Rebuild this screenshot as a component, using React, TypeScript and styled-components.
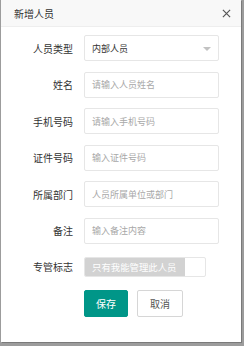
import React from 'react'
import styled, { createGlobalStyle } from 'styled-components'

const GlobalStyle = createGlobalStyle`
  html, body {
    margin: 0;
    padding: 0;
    background: #9c9c9c;
    font-family: "Noto Sans CJK SC", "Liberation Sans", sans-serif;
  }
`

const Page = styled.div`
  width: 244px;
  height: 346px;
  padding-left: 1px;
  box-sizing: border-box;
`

const Modal = styled.div`
  width: 240px;
  height: 342px;
  background: #fff;
  box-shadow: 1px 1px 0 #7a7a7a;
  display: flex;
  flex-direction: column;
`

const Header = styled.div`
  height: 27px;
  box-sizing: border-box;
  background: #f8f8f8;
  border-bottom: 1px solid #eee;
  display: flex;
  align-items: center;
  justify-content: space-between;
  padding: 0 10px 0 13px;
`

const Title = styled.span`
  font-size: 10px;
  color: #333;
`

const Close = styled.svg`
  width: 9px;
  height: 9px;
`

const Form = styled.div`
  display: flex;
  flex-direction: column;
  padding: 8px 22px 0 0;
  gap: 10.5px;
`

const Row = styled.div<{ $top?: number }>`
  display: flex;
  align-items: center;
  gap: 11px;
  margin-top: ${(p) => p.$top || 0}px;
`

const Label = styled.label`
  width: 72px;
  text-align: right;
  font-size: 10px;
  color: #333;
  flex-shrink: 0;
`

const Field = styled.div<{ $muted?: boolean }>`
  position: relative;
  flex: 1;
  height: 26px;
  box-sizing: border-box;
  border: 1px solid #e6e6e6;
  border-radius: 2px;
  display: flex;
  align-items: center;
  padding-left: 7px;
  font-size: 9px;
  color: ${(p) => (p.$muted ? '#a8a8a8' : '#333')};
`

const Arrow = styled.span`
  position: absolute;
  right: 7px;
  top: 11px;
  border-left: 4px solid transparent;
  border-right: 4px solid transparent;
  border-top: 4px solid #c2c2c2;
`

const Switch = styled.div`
  display: flex;
  width: 122px;
  height: 20px;
  box-sizing: border-box;
  border: 1px solid #e6e6e6;
  border-radius: 2px;
  overflow: hidden;
`

const SwitchText = styled.div`
  width: 100px;
  background: #d2d2d2;
  color: #fff;
  font-size: 9.4px;
  display: flex;
  align-items: center;
  padding-left: 7px;
  box-sizing: border-box;
`

const Actions = styled.div`
  display: flex;
  gap: 9px;
  padding-left: 83px;
  margin-top: 13px;
`

const Button = styled.button<{ $primary?: boolean }>`
  height: 27px;
  box-sizing: border-box;
  padding: 0;
  width: ${(p) => (p.$primary ? 44 : 46)}px;
  border-radius: 2px;
  border: 1px solid ${(p) => (p.$primary ? '#009688' : '#d6d6d6')};
  background: ${(p) => (p.$primary ? '#009688' : '#fff')};
  color: ${(p) => (p.$primary ? '#fff' : '#555')};
  font-family: inherit;
  font-size: 10px;
`

const fields = [
  { label: '姓名', placeholder: '请输入人员姓名' },
  { label: '手机号码', placeholder: '请输入手机号码' },
  { label: '证件号码', placeholder: '输入证件号码' },
  { label: '所属部门', placeholder: '人员所属单位或部门' },
  { label: '备注', placeholder: '输入备注内容' },
]

export default function App() {
  return (
    <Page>
      <GlobalStyle />
      <Modal>
        <Header>
          <Title>新增人员</Title>
          <Close viewBox="0 0 10 10">
            <path d="M1 1 L9 9 M9 1 L1 9" stroke="#555" strokeWidth="1.3" />
          </Close>
        </Header>
        <Form>
          <Row>
            <Label>人员类型</Label>
            <Field>
              内部人员
              <Arrow />
            </Field>
          </Row>
          {fields.map((f) => (
            <Row key={f.label}>
              <Label>{f.label}</Label>
              <Field $muted>{f.placeholder}</Field>
            </Row>
          ))}
          <Row $top={2.5}>
            <Label>专管标志</Label>
            <Switch>
              <SwitchText>只有我能管理此人员</SwitchText>
            </Switch>
          </Row>
        </Form>
        <Actions>
          <Button $primary>保存</Button>
          <Button>取消</Button>
        </Actions>
      </Modal>
    </Page>
  )
}
